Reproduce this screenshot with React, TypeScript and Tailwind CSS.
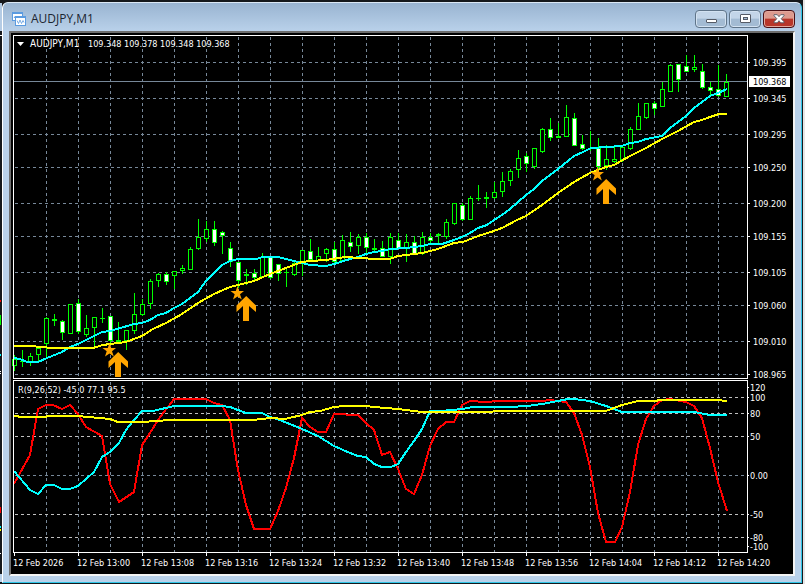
import clsx from "clsx";

type Point = [number, number];
// kind, high, body top, body bottom, low
type Candle = ["up" | "down" | "flat", number, number, number, number];

const FIRST_X = 14;
const STEP = 8;

const candles: Candle[] = [
  ["up", 355, 359, 365, 370],
  ["flat", 350, 361, 361, 366],
  ["up", 353, 356, 362, 365],
  ["up", 347, 348, 354, 361],
  ["up", 317, 318, 343, 356],
  ["flat", 314, 319, 320, 325],
  ["down", 320, 321, 332, 339],
  ["up", 304, 304, 333, 333],
  ["down", 299, 303, 331, 333],
  ["up", 315, 328, 334, 336],
  ["up", 317, 317, 327, 346],
  ["flat", 308, 318, 318, 322],
  ["down", 316, 316, 340, 342],
  ["flat", 322, 340, 341, 343],
  ["up", 330, 330, 340, 349],
  ["up", 293, 314, 330, 333],
  ["up", 299, 304, 314, 315],
  ["up", 279, 281, 303, 308],
  ["up", 273, 274, 280, 286],
  ["down", 272, 274, 281, 284],
  ["up", 271, 271, 275, 288],
  ["up", 265, 268, 270, 273],
  ["up", 247, 249, 269, 269],
  ["up", 219, 237, 248, 249],
  ["up", 221, 229, 238, 241],
  ["down", 221, 229, 242, 245],
  ["down", 231, 232, 235, 253],
  ["down", 242, 248, 261, 266],
  ["down", 262, 262, 280, 287],
  ["flat", 269, 274, 275, 284],
  ["down", 269, 273, 277, 279],
  ["up", 253, 257, 276, 276],
  ["down", 257, 257, 277, 278],
  ["down", 264, 264, 273, 280],
  ["flat", 267, 272, 272, 286],
  ["up", 262, 263, 274, 275],
  ["up", 250, 250, 262, 275],
  ["down", 239, 251, 259, 259],
  ["up", 247, 256, 260, 260],
  ["up", 248, 249, 253, 261],
  ["down", 242, 249, 261, 263],
  ["up", 235, 240, 260, 261],
  ["down", 232, 242, 246, 251],
  ["up", 234, 237, 245, 253],
  ["down", 233, 237, 247, 252],
  ["flat", 239, 248, 249, 250],
  ["down", 241, 248, 256, 256],
  ["up", 233, 237, 256, 263],
  ["down", 233, 240, 248, 248],
  ["up", 234, 242, 247, 261],
  ["down", 236, 242, 253, 254],
  ["up", 232, 237, 253, 254],
  ["down", 233, 237, 240, 243],
  ["flat", 233, 234, 235, 242],
  ["up", 219, 222, 236, 238],
  ["up", 203, 203, 223, 224],
  ["down", 203, 205, 219, 220],
  ["up", 196, 198, 219, 219],
  ["flat", 185, 198, 198, 200],
  ["flat", 192, 197, 198, 207],
  ["up", 182, 192, 197, 198],
  ["up", 172, 181, 191, 196],
  ["up", 169, 171, 180, 185],
  ["up", 150, 158, 169, 177],
  ["down", 153, 156, 163, 171],
  ["up", 148, 148, 166, 168],
  ["up", 128, 129, 151, 152],
  ["down", 118, 129, 137, 140],
  ["flat", 123, 136, 137, 137],
  ["up", 105, 117, 136, 136],
  ["down", 113, 118, 145, 145],
  ["down", 135, 144, 148, 149],
  ["flat", 131, 148, 148, 150],
  ["down", 138, 148, 166, 170],
  ["up", 145, 159, 165, 169],
  ["up", 145, 159, 161, 162],
  ["up", 147, 147, 159, 161],
  ["up", 127, 129, 148, 149],
  ["up", 103, 116, 129, 129],
  ["up", 103, 103, 117, 118],
  ["down", 101, 103, 108, 114],
  ["up", 82, 89, 106, 106],
  ["up", 64, 65, 91, 91],
  ["down", 64, 64, 79, 91],
  ["down", 55, 66, 71, 71],
  ["up", 55, 67, 69, 71],
  ["down", 64, 71, 87, 88],
  ["down", 82, 87, 90, 94],
  ["down", 65, 89, 95, 96],
  ["up", 74, 82, 96, 96],
];

const fastAverage: Point[] = [
  [14, 358], [20, 359], [27, 362], [38, 362], [47, 358], [62, 352], [70, 347], [78, 344],
  [102, 332], [110, 331], [134, 324], [142, 323], [150, 320], [158, 315], [166, 313],
  [174, 308], [182, 304], [198, 292], [206, 281], [214, 273], [222, 265], [230, 261],
  [238, 259], [257, 259], [262, 257], [278, 257], [286, 259], [302, 263], [310, 265],
  [326, 266], [334, 264], [350, 259], [358, 257], [366, 254], [374, 252], [382, 251],
  [390, 249], [406, 248], [414, 247], [422, 246], [430, 244], [442, 244], [454, 240],
  [462, 237], [470, 233], [478, 228], [487, 225], [494, 220], [502, 215], [510, 209],
  [526, 195], [534, 189], [542, 181], [558, 169], [574, 156], [583, 152], [591, 148],
  [607, 147], [622, 146], [630, 143], [638, 142], [646, 139], [662, 136], [670, 128],
  [686, 116], [694, 108], [710, 96], [718, 93], [727, 89],
];

const slowAverage: Point[] = [
  [14, 346], [32, 346], [40, 347], [53, 348], [93, 348], [103, 345], [110, 344],
  [126, 342], [134, 339], [142, 336], [153, 329], [166, 323], [182, 314], [198, 303],
  [214, 294], [230, 287], [238, 285], [254, 281], [270, 274], [286, 268], [302, 262],
  [310, 261], [326, 260], [345, 257], [360, 258], [375, 259], [390, 259], [398, 256],
  [414, 254], [422, 253], [438, 249], [454, 243], [463, 242], [478, 236], [494, 231],
  [502, 228], [517, 220], [526, 216], [542, 205], [558, 193], [574, 182], [590, 173],
  [606, 167], [614, 165], [630, 156], [646, 148], [662, 139], [678, 131], [694, 122],
  [702, 120], [710, 117], [719, 114], [727, 114],
];

const rShort: Point[] = [
  [14, 484], [30, 455], [38, 409], [46, 405], [53, 405], [62, 409], [70, 405], [78, 414],
  [86, 427], [102, 436], [110, 484], [119, 502], [134, 492], [142, 445], [150, 433],
  [158, 420], [174, 399], [206, 399], [214, 403], [222, 405], [230, 420], [238, 470],
  [246, 505], [254, 529], [270, 529], [278, 511], [286, 488], [294, 458], [302, 418],
  [310, 427], [318, 432], [326, 432], [334, 414], [358, 415], [366, 423], [374, 430],
  [382, 455], [390, 452], [398, 469], [406, 489], [414, 494], [422, 475], [430, 446],
  [438, 429], [446, 422], [454, 422], [462, 405], [470, 401], [486, 402], [498, 401],
  [542, 401], [550, 400], [566, 402], [574, 413], [582, 435], [590, 467], [598, 513],
  [606, 542], [615, 542], [622, 527], [630, 492], [638, 445], [646, 419], [654, 406],
  [662, 400], [670, 399], [686, 402], [694, 406], [702, 418], [710, 448], [718, 482],
  [727, 511],
];

const rMiddle: Point[] = [
  [14, 471], [30, 490], [38, 494], [46, 485], [54, 485], [62, 489], [70, 489], [78, 486],
  [94, 472], [102, 457], [110, 452], [119, 443], [126, 430], [134, 420], [142, 411],
  [153, 411], [174, 406], [222, 406], [230, 407], [246, 413], [262, 413], [270, 417],
  [280, 420], [302, 429], [318, 436], [334, 446], [350, 453], [358, 456], [366, 457],
  [374, 464], [382, 467], [391, 467], [398, 464], [406, 452], [414, 441], [422, 429],
  [430, 411], [440, 411], [463, 409], [472, 407], [510, 407], [527, 406], [542, 404],
  [558, 401], [568, 399], [574, 399], [590, 401], [606, 406], [614, 409], [622, 412],
  [694, 412], [710, 415], [727, 415],
];

const rLong: Point[] = [
  [14, 416], [23, 417], [45, 417], [48, 416], [78, 416], [110, 419], [118, 422],
  [142, 422], [170, 420], [253, 420], [270, 418], [285, 419], [302, 415], [310, 412],
  [320, 411], [334, 407], [345, 406], [366, 406], [374, 407], [398, 409], [422, 412],
  [487, 412], [500, 411], [606, 411], [614, 408], [622, 405], [638, 401], [653, 401],
  [662, 400], [717, 400], [727, 401],
];

const priceTicks: [number, string][] = [
  [62, "109.395"],
  [98, "109.345"],
  [134, "109.295"],
  [167, "109.250"],
  [203, "109.200"],
  [236, "109.155"],
  [272, "109.105"],
  [305, "109.060"],
  [341, "109.010"],
  [374, "108.965"],
];

const oscillatorTicks: [number, string][] = [
  [387, "120"],
  [397, "100"],
  [413, "80"],
  [436, "50"],
  [475, "0.00"],
  [514, "-50"],
  [537, "-80"],
  [546, "-100"],
];

const levels = [397, 413, 436, 514, 537];

const timeTicks = [
  "12 Feb 2026",
  "12 Feb 13:00",
  "12 Feb 13:08",
  "12 Feb 13:16",
  "12 Feb 13:24",
  "12 Feb 13:32",
  "12 Feb 13:40",
  "12 Feb 13:48",
  "12 Feb 13:56",
  "12 Feb 14:04",
  "12 Feb 14:12",
  "12 Feb 14:20",
];

const signals: { star: Point; arrow: Point }[] = [
  { star: [109, 350], arrow: [118, 352] },
  { star: [237, 293], arrow: [246, 296] },
  { star: [597, 174], arrow: [606, 179] },
];

const gridColumns = Array.from({ length: 22 }, (_, i) => 46 + i * 32);

function toPoints(points: Point[]) {
  return points.map(([x, y]) => `${x},${y}`).join(" ");
}

function CandleShape({ candle, x }: { candle: Candle; x: number }) {
  const [kind, high, top, bottom, low] = candle;
  return (
    <g className="fill-[#00ff00]">
      <rect x={x} y={high} width={1} height={low - high + 1} />
      <rect x={x - 2} y={top} width={5} height={bottom - top + 1} />
      {kind !== "flat" && (
        <rect
          x={x - 1}
          y={top + 1}
          width={3}
          height={Math.max(bottom - top - 1, 1)}
          className={kind === "up" ? "fill-black" : "fill-white"}
        />
      )}
    </g>
  );
}

function Signal({ star, arrow }: { star: Point; arrow: Point }) {
  return (
    <g className="fill-[#ffa500]">
      <path
        transform={`translate(${star[0]} ${star[1]})`}
        d="M.5-7 2.2-2H7L3 1.2 4.8 6.5.5 3.4-4 6.5-2.3 1.2-6.5-2H-1.2Z"
      />
      <path
        transform={`translate(${arrow[0]} ${arrow[1]})`}
        d="M.2 0 10 9.500V16L3 10V25H-3V10L-9.500 16V9.500Z"
      />
    </g>
  );
}

function Chart() {
  return (
    <svg
      viewBox="11 33 782 541"
      className="block h-auto w-full bg-black font-['DejaVu_Sans_Condensed','DejaVu_Sans',sans-serif] text-[9px]"
      role="img"
      aria-label="AUDJPY,M1"
    >
      <g shapeRendering="crispEdges">
        <g className="stroke-[#778899]" strokeDasharray="3 3">
          {gridColumns.map((x) => (
            <g key={x}>
              <line x1={x + 0.5} x2={x + 0.5} y1={37} y2={378} />
              <line x1={x + 0.5} x2={x + 0.5} y1={382} y2={553} />
            </g>
          ))}
          {priceTicks.map(([y]) => (
            <line key={y} x1={15} x2={747} y1={y + 0.5} y2={y + 0.5} />
          ))}
          <line x1={15} x2={747} y1={475.5} y2={475.5} />
        </g>
        <g className="stroke-[#c0c0c0]" strokeDasharray="3 3">
          {levels.map((y) => (
            <line key={y} x1={15} x2={747} y1={y + 0.5} y2={y + 0.5} />
          ))}
        </g>

        <line x1={14} x2={747} y1={81.5} y2={81.5} className="stroke-[#778899]" />

        {candles.map((candle, i) => (
          <CandleShape key={i} candle={candle} x={FIRST_X + i * STEP} />
        ))}

        <g className="fill-none" strokeWidth={2}>
          <polyline points={toPoints(fastAverage)} className="stroke-[#00ffff]" />
          <polyline points={toPoints(slowAverage)} className="stroke-[#ffff00]" />
          <polyline points={toPoints(rShort)} className="stroke-[#ff0000]" />
          <polyline points={toPoints(rMiddle)} className="stroke-[#00ffff]" />
          <polyline points={toPoints(rLong)} className="stroke-[#ffff00]" />
        </g>

        <g className="fill-none stroke-white">
          <rect x={13.5} y={35.5} width={734} height={343} />
          <rect x={13.5} y={380.5} width={734} height={172} />
          {priceTicks.map(([y]) => (
            <line key={y} x1={748} x2={750} y1={y + 0.5} y2={y + 0.5} />
          ))}
          {oscillatorTicks.map(([y]) => (
            <line key={y} x1={748} x2={749} y1={y + 0.5} y2={y + 0.5} />
          ))}
          {timeTicks.map((label, i) => (
            <line key={label} x1={14.5 + i * 64} x2={14.5 + i * 64} y1={553} y2={556} />
          ))}
        </g>
      </g>

      {signals.map((s) => (
        <Signal key={s.star[0]} star={s.star} arrow={s.arrow} />
      ))}

      <rect x={749} y={76} width={41} height={11} className="fill-white" />
      <path d="M17 42h7l-3.500 4Z" className="fill-white" />

      <g className="fill-white">
        <text x={30} y={47} className="text-[10px]">AUDJPY,M1</text>
        <text x={88} y={47}>109.348 109.378 109.348 109.368</text>
        <text x={18} y={393}>R(9,26,52) -45.0 77.1 95.5</text>
        {priceTicks.map(([y, label]) => (
          <text key={label} x={753} y={y + 4}>{label}</text>
        ))}
        {oscillatorTicks.map(([y, label]) => (
          <text key={label} x={750} y={y + 4}>{label}</text>
        ))}
        {timeTicks.map((label, i) => (
          <text key={label} x={13 + i * 64} y={566}>{label}</text>
        ))}
      </g>
      <text x={753} y={85} className="fill-black">109.368</text>
    </svg>
  );
}

function ChartIcon() {
  return (
    <svg viewBox="0 0 14 14" className="h-[14px] w-[14px] shrink-0" aria-hidden="true">
      <rect x=".5" y=".5" width="10" height="8" className="fill-white stroke-[#5b9be0]" />
      <path d="M0 0h11v2H0Z" className="fill-[#5b9be0]" />
      <path d="m2 6 1.500-2L5 6" className="fill-none stroke-[#5b9be0]" />
      <rect x="3.500" y="4.500" width="10" height="9" className="fill-white stroke-[#5b9be0]" />
      <path d="M3 4h11v2H3Z" className="fill-[#5b9be0]" />
      <path d="m5 8.500 1.500 3L8 8l1.500 3.500L11 8.500l1 2" className="fill-none stroke-[#5b9be0]" strokeWidth=".8" />
    </svg>
  );
}

// edge of the chart window that sits behind this one
function BackWindowEdge() {
  return (
    <svg
      viewBox="0 0 2 584"
      preserveAspectRatio="none"
      className="absolute top-0 left-0 h-full w-[2px]"
      shapeRendering="crispEdges"
      aria-hidden="true"
    >
      <rect y={3} width={2} height={28} className="fill-[#b4cbe4]" />
      <rect y={35} width={2} height={1} className="fill-white" />
      <rect y={300} width={1} height={2} className="fill-[#ff0000]" />
      <rect y={315} width={1} height={10} className="fill-[#00ff00]" />
      <rect y={354} width={1} height={2} className="fill-[#00ffff]" />
      <rect y={371} width={1} height={1} className="fill-white" />
      <rect y={373} width={1} height={1} className="fill-white" />
      <rect y={507} width={1} height={6} className="fill-[#ff0000]" />
      <rect y={526} width={1} height={2} className="fill-[#00ffff]" />
      <rect y={529} width={1} height={2} className="fill-[#ffff00]" />
      <rect y={553} width={1} height={1} className="fill-white" />
      <rect y={574} width={2} height={8} className="fill-[#b9d1ea]" />
    </svg>
  );
}

function WindowButton({ kind }: { kind: "Minimize" | "Maximize" | "Close" }) {
  return (
    <button
      type="button"
      aria-label={kind}
      className={clsx(
        "flex h-[18px] w-8 items-center justify-center rounded-sm border",
        kind === "Close"
          ? "border-[#4a1016] bg-linear-to-b from-[#dd9a8e] from-45% to-[#b8362a] to-50% shadow-[inset_0_0_0_1px_#e2a79c]"
          : "border-[#5f7489] bg-linear-to-b from-[#c3d5e8] from-45% to-[#a3bbd3] to-50% shadow-[inset_0_0_0_1px_#d3e2f1]",
      )}
    >
      <svg viewBox="0 0 12 10" className="h-[10px] w-3" aria-hidden="true">
        {kind === "Minimize" && (
          <rect x="1.500" y="5.500" width="10" height="3" rx=".5" className="fill-white stroke-[#555b66]" />
        )}
        {kind === "Maximize" && (
          <>
            <rect x="1.500" y=".5" width="10" height="8" rx=".5" className="fill-white stroke-[#555b66]" />
            <rect x="4.500" y="3.500" width="4" height="2" className="fill-[#a3bbd3] stroke-[#555b66]" />
          </>
        )}
        {kind === "Close" && (
          <path
            d="M1 .7h3.300L6 2.700 7.700.7H11v1L8.200 4.700 11 7.800v1H7.700L6 6.700 4.300 8.800H1v-1L3.800 4.700 1 1.700Z"
            className="fill-white stroke-[#555b66]"
            strokeWidth=".9"
          />
        )}
      </svg>
    </button>
  );
}

export default function App() {
  return (
    <div className="relative border-r-2 border-[#e6e6e6] bg-[#15181c] pt-[2px] pr-px pb-px pl-[2px]">
      <BackWindowEdge />
      <main className="rounded-t-md border border-t-[#dbe8f5] border-r-[#2fc6e8] border-b-[#2fc6e8] border-l-white bg-[#b9d1ea] bg-linear-to-b from-[#99b4d1] to-[#b9d1ea] to-[28px] px-[6px] pb-[6px]">
        <header className="flex h-7 items-center gap-[5px] pt-1 pl-[3px]">
          <ChartIcon />
          <h1 className="font-['Open_Sans','Noto_Sans',sans-serif] text-xs text-[#1c2530]">
            AUDJPY,M1
          </h1>
          <div className="ml-auto flex gap-[2px]">
            <WindowButton kind="Minimize" />
            <WindowButton kind="Maximize" />
            <WindowButton kind="Close" />
          </div>
        </header>
        <div className="border-2 border-t-[#6d6d6d] border-r-[#f4f4f4] border-b-[#f4f4f4] border-l-[#6d6d6d]">
          <Chart />
        </div>
      </main>
    </div>
  );
}
